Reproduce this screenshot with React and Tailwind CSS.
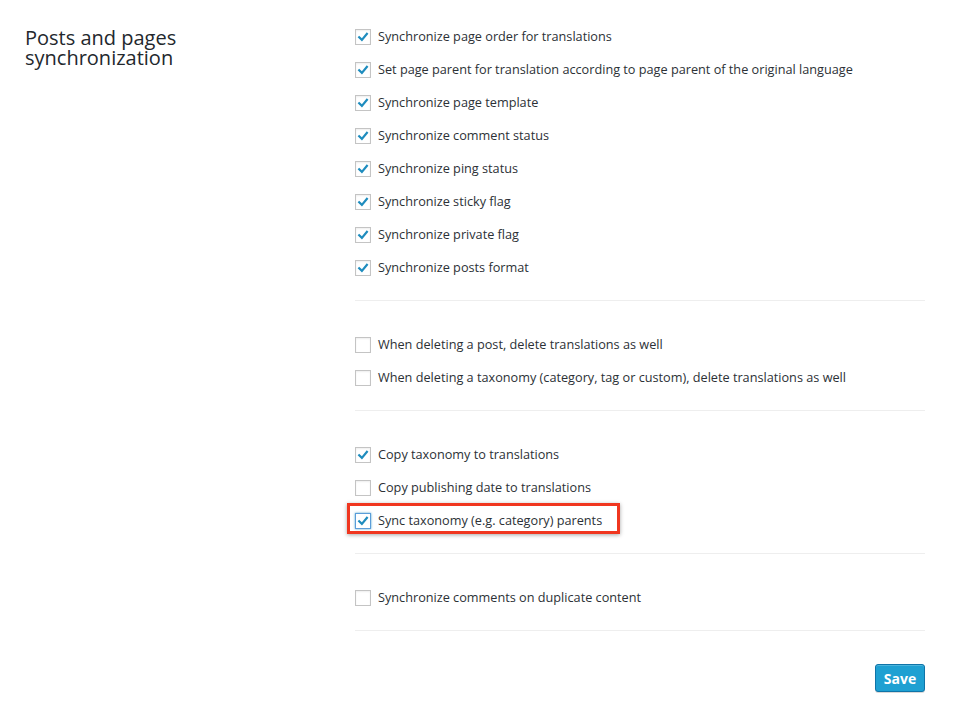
import React from "react";

const Check = ({ checked, focus }) => (
  <span
    className={`flex items-center justify-center w-4 h-4 shrink-0 border bg-white ${
      focus ? "border-[#5b9dd9] shadow-[0_0_2px_rgba(30,140,190,0.8)]" : "border-[#c4c4c4] shadow-[inset_0_1px_2px_rgba(0,0,0,0.07)]"
    }`}
  >
    {checked && (
      <svg width="12" height="12" viewBox="0 0 12 12">
        <path d="M2.2 6.2 L4.9 8.9 L9.9 2.8" fill="none" stroke="#1e8cbe" strokeWidth="2.2" strokeLinecap="square" />
      </svg>
    )}
  </span>
);

const Row = ({ label, checked, focus }) => (
  <div className="h-[33px] flex items-center gap-[7px] text-[12.7px] text-[#2c3136]">
    <Check checked={checked} focus={focus} />
    <span>{label}</span>
  </div>
);

const Divider = () => <div className="h-px bg-[#eeeeee]" />;

export default function App() {
  return (
    <div className="w-[971px] h-[710px] bg-white flex" style={{ fontFamily: '"Open Sans", sans-serif' }}>
      <div className="w-[355px] shrink-0 pl-[25px] pt-[28px]">
        <h2 className="text-[20px] leading-[20px] text-[#23282d]">
          Posts and pages
          <br />
          synchronization
        </h2>
      </div>
      <div className="w-[570px] pt-[20px] flex flex-col">
        <div>
          <Row checked label="Synchronize page order for translations" />
          <Row checked label="Set page parent for translation according to page parent of the original language" />
          <Row checked label="Synchronize page template" />
          <Row checked label="Synchronize comment status" />
          <Row checked label="Synchronize ping status" />
          <Row checked label="Synchronize sticky flag" />
          <Row checked label="Synchronize private flag" />
          <Row checked label="Synchronize posts format" />
        </div>
        <div className="mt-[16px]"><Divider /></div>
        <div className="mt-[27px]">
          <Row label="When deleting a post, delete translations as well" />
          <Row label="When deleting a taxonomy (category, tag or custom), delete translations as well" />
        </div>
        <div className="mt-[16px]"><Divider /></div>
        <div className="mt-[27px]">
          <Row checked label="Copy taxonomy to translations" />
          <Row label="Copy publishing date to translations" />
          <div className="relative">
            <div className="absolute left-[-8px] top-[-1px] w-[273px] h-[31px] border-[3px] border-[#f0361f] shadow-[0_1px_4px_rgba(0,0,0,0.35)] pointer-events-none" />
            <Row checked focus label="Sync taxonomy (e.g. category) parents" />
          </div>
        </div>
        <div className="mt-[16px]"><Divider /></div>
        <div className="mt-[27px]">
          <Row label="Synchronize comments on duplicate content" />
        </div>
        <div className="mt-[16px]"><Divider /></div>
        <div className="mt-[33px] flex justify-end">
          <button className="w-[50px] h-[28px] rounded-[3px] bg-[#1ea0d2] border border-[#0f74a8] text-white text-[14px] font-bold shadow-[inset_0_1px_0_rgba(120,200,230,0.5),0_1px_0_rgba(0,0,0,0.15)]">
            Save
          </button>
        </div>
      </div>
    </div>
  );
}
